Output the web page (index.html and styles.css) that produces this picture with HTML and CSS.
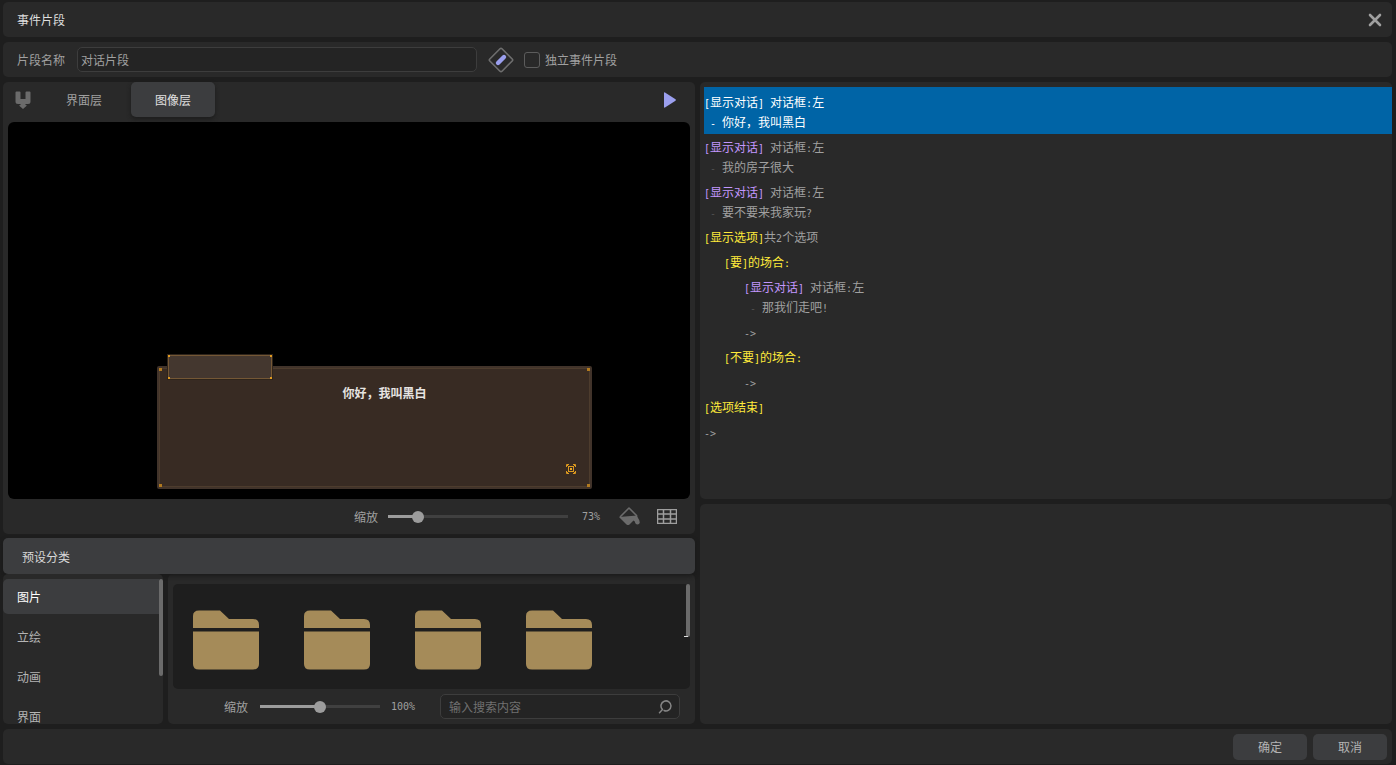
FILE: index.html
```html
<!DOCTYPE html>
<html lang="zh-CN">
<head>
<meta charset="utf-8">
<title>事件片段</title>
<link rel="stylesheet" href="styles.css">
</head>
<body>
<div class="window">
  <header class="panel titlebar">
    <span>事件片段</span>
    <button class="icon-button" type="button" aria-label="关闭">
      <svg width="14" height="14" viewBox="0 0 14 14"><path d="M2 2L12 12M12 2L2 12" fill="none" stroke="#a0a0a0" stroke-width="2.6" stroke-linecap="round"/></svg>
    </button>
  </header>

  <div class="panel name-row">
    <label for="clip-name">片段名称</label>
    <input id="clip-name" class="field name-input" type="text" value="对话片段">
    <button class="icon-button edit" type="button" aria-label="编辑">
      <svg width="26" height="26" viewBox="0 0 26 26"><path d="M12 1.8Q13 .8 14 1.8L24.2 12Q25.2 13 24.2 14L14 24.2Q13 25.2 12 24.2L1.8 14Q.8 13 1.8 12Z" fill="none" stroke="#6e6e6e" stroke-width="1.6"/><path d="M10 16L16 10" stroke="#9b9fee" stroke-width="4.4" stroke-linecap="round"/></svg>
    </button>
    <input id="standalone" class="check" type="checkbox">
    <label for="standalone">独立事件片段</label>
  </div>

  <main class="columns">
    <div class="left">
      <section class="panel viewer">
        <div class="tabs">
          <button class="icon-button tool" type="button" aria-label="图层工具">
            <svg width="16" height="18" viewBox="0 0 16 18"><path d="M.5 1.5Q.5 .5 1.500 .5H4.500Q5.500 .5 5.500 1.500V8H10.500V1.500Q10.500 .5 11.500 .5H14.500Q15.500 .5 15.500 1.500V10.500Q15.500 13 13 13H10.500V14L12 14.500L8 18L4 14.500L5.500 14V13H3Q.5 13 .5 10.500Z" fill="#6b6b6b"/></svg>
          </button>
          <button class="tab" type="button">界面层</button>
          <button class="tab active" type="button">图像层</button>
          <button class="icon-button play" type="button" aria-label="播放">
            <svg width="12" height="16" viewBox="0 0 12 16"><path d="M0 1Q0 0 1 .4L11.5 7.300Q12.200 8 11.5 8.700L1 15.600Q0 16 0 15Z" fill="#9b9fee"/></svg>
          </button>
        </div>
        <div class="stage">
          <div class="dialog">
            <i class="pin tl"></i><i class="pin tr"></i><i class="pin bl"></i><i class="pin br"></i>
            <div class="nameplate"><i class="dot tl"></i><i class="dot tr"></i><i class="dot bl"></i><i class="dot br"></i></div>
            <p class="speech">你好，我叫黑白</p>
            <svg class="next" width="10" height="10" viewBox="0 0 10 10"><path d="M.5 3V.5H3M7 .5H9.5V3M9.5 7V9.5H7M3 9.5H.5V7M1 1L3 3M9 1L7 3M9 9L7 7M1 9L3 7M2.5 2.5H7.5V7.5H2.5Z" fill="none" stroke="#dc991f"/><path d="M4 4H6V6H4Z" fill="#e8a72b"/></svg>
          </div>
        </div>
        <div class="view-controls">
          <label for="view-zoom">缩放</label>
          <input id="view-zoom" class="range wide" type="range" min="0" max="100" value="14">
          <output class="half view-value" for="view-zoom">73%</output>
          <button class="icon-button fill-tool" type="button" aria-label="填充">
            <svg width="22" height="19" viewBox="0 0 22 19"><path d="M1 10L10 1L18 9" fill="none" stroke="#6b6b6b" stroke-width="1.6" stroke-linejoin="round"/><path d="M0 10L18 8.5L19 11Q21 13.5 20.800 15.5Q20.5 17.5 18.5 17.5Q16.300 17.5 15.800 14.5L14.5 13.5L10.5 17.5Q9 18.700 7.5 17.5Z" fill="#6b6b6b"/></svg>
          </button>
          <button class="icon-button grid-tool" type="button" aria-label="网格">
            <svg width="20" height="15" viewBox="0 0 20 15"><path d="M.5 .5H19.5V14.5H.5ZM6.5 .5V14.5M13.5 .5V14.5M.5 5H19.5M.5 10H19.5" fill="none" stroke="#9e9e9e" stroke-width="1.5"/></svg>
          </button>
        </div>
      </section>

      <h2 class="section-head">预设分类</h2>

      <div class="presets">
        <nav class="panel categories">
          <button class="category active" type="button">图片</button>
          <button class="category" type="button">立绘</button>
          <button class="category" type="button">动画</button>
          <button class="category" type="button">界面</button>
          <span class="scroll-thumb category-thumb"></span>
        </nav>
        <section class="panel browser">
          <div class="folders">
            <svg class="folder" viewBox="0 0 66 60"><path d="M0 18V6Q0 .5 6 .5H27L36 9H60Q66 9 66 15V18ZM0 21.5H66V54Q66 59.5 60 59.5H6Q0 59.5 0 54Z"/></svg>
            <svg class="folder" viewBox="0 0 66 60"><path d="M0 18V6Q0 .5 6 .5H27L36 9H60Q66 9 66 15V18ZM0 21.5H66V54Q66 59.5 60 59.5H6Q0 59.5 0 54Z"/></svg>
            <svg class="folder" viewBox="0 0 66 60"><path d="M0 18V6Q0 .5 6 .5H27L36 9H60Q66 9 66 15V18ZM0 21.5H66V54Q66 59.5 60 59.5H6Q0 59.5 0 54Z"/></svg>
            <svg class="folder" viewBox="0 0 66 60"><path d="M0 18V6Q0 .5 6 .5H27L36 9H60Q66 9 66 15V18ZM0 21.5H66V54Q66 59.5 60 59.5H6Q0 59.5 0 54Z"/></svg>
            <span class="scroll-thumb folder-thumb"></span>
            <span class="thumb-mark"></span>
          </div>
          <div class="browser-controls">
            <label for="icon-zoom">缩放</label>
            <input id="icon-zoom" class="range narrow" type="range" min="0" max="100" value="50">
            <output class="half icon-value" for="icon-zoom">100%</output>
            <div class="field search">
              <input type="search" placeholder="输入搜索内容" aria-label="搜索">
              <svg width="14" height="14" viewBox="0 0 14 14"><path d="M4.300 9.300A5 5 0 1 1 6 10.5M4.5 9.5L1.5 12.800" fill="none" stroke="#858585" stroke-width="1.5" stroke-linecap="round"/></svg>
            </div>
          </div>
        </section>
      </div>
    </div>

    <div class="right">
      <section class="panel script">
        <div class="command selected"><div class="line"><b class="talk"><i>[</i>显示对话<i>] </i></b>对话框<i>:</i>左</div><div class="line"><i class="dash"> - </i>你好，我叫黑白</div></div>
        <div class="command"><div class="line"><b class="talk"><i>[</i>显示对话<i>] </i></b>对话框<i>:</i>左</div><div class="line"><i class="dash"> - </i>我的房子很大</div></div>
        <div class="command"><div class="line"><b class="talk"><i>[</i>显示对话<i>] </i></b>对话框<i>:</i>左</div><div class="line"><i class="dash"> - </i>要不要来我家玩<i>?</i></div></div>
        <div class="command"><div class="line"><b class="choice"><i>[</i>显示选项<i>]</i></b>共<i>2</i>个选项</div></div>
        <div class="branch">
          <div class="command"><div class="line"><b class="choice"><i>[</i>要<i>]</i>的场合<i>:</i></b></div></div>
          <div class="branch">
            <div class="command"><div class="line"><b class="talk"><i>[</i>显示对话<i>] </i></b>对话框<i>:</i>左</div><div class="line"><i class="dash"> - </i>那我们走吧<i>!</i></div></div>
            <div class="command"><div class="line"><i>-&gt;</i></div></div>
          </div>
          <div class="command"><div class="line"><b class="choice"><i>[</i>不要<i>]</i>的场合<i>:</i></b></div></div>
          <div class="branch">
            <div class="command"><div class="line"><i>-&gt;</i></div></div>
          </div>
        </div>
        <div class="command"><div class="line"><b class="choice"><i>[</i>选项结束<i>]</i></b></div></div>
        <div class="command"><div class="line"><i>-&gt;</i></div></div>
      </section>
      <section class="panel"></section>
    </div>
  </main>

  <footer class="panel actions">
    <button class="button" type="button">确定</button>
    <button class="button" type="button">取消</button>
  </footer>
</div>
</body>
</html>
```
FILE: styles.css
```css
* { box-sizing: border-box; }

body {
  margin: 0;
  background: #1e1e1e;
  color: #a0a0a0;
  font: 12px/20px "Noto Sans CJK SC", sans-serif;
}

button, input { font: inherit; color: inherit; }
svg { display: block; flex: none; }

.window {
  height: 100vh;
  display: grid;
  grid-template-rows: 35px 35px minmax(0, 1fr) 35px;
  gap: 5px;
  padding: 2px 4px 1px 3px;
}

.panel { background: #292929; border-radius: 5px; }

.icon-button { padding: 0; border: 0; background: none; }

.titlebar {
  display: flex;
  align-items: center;
  justify-content: space-between;
  padding: 0 10px 0 14px;
  color: #dedede;
}

.name-row {
  display: flex;
  align-items: center;
  padding-left: 14px;
}

.field {
  height: 25px;
  border: 1px solid #3d3d3d;
  border-radius: 5px;
  background: #242424;
  outline: 0;
}

.name-input { width: 400px; margin-left: 12px; padding: 0 3px; }
.edit { margin: 0 10px 0 11px; }

.check {
  appearance: none;
  width: 16px;
  height: 16px;
  margin: 0 5px 0 0;
  border: 1px solid #5c5c5c;
  border-radius: 3px;
}

.columns {
  display: grid;
  grid-template-columns: minmax(0, 1fr) minmax(0, 1fr);
  gap: 5px;
  min-height: 0;
}

.left { display: flex; flex-direction: column; min-height: 0; }

.viewer { flex: 1; display: flex; flex-direction: column; min-height: 0; padding: 0 5px; }

.tabs {
  display: flex;
  align-items: center;
  height: 40px;
  padding: 0 14px 5px 7px;
}

.tool { margin-right: 11px; }

.tab {
  width: 84px;
  height: 35px;
  padding: 0;
  border: 0;
  border-radius: 5px;
  background: none;
}

.tab.active { background: #3c3d3f; color: #e0e0e0; box-shadow: 0 2px 4px #1c1c1c; }
.tab + .tab { margin-left: 5px; }
.play { margin-left: auto; }

.stage {
  position: relative;
  flex: 1;
  min-height: 0;
  overflow: hidden;
  border-radius: 6px;
  background: #000;
}

.dialog {
  position: absolute;
  left: 149px;
  bottom: 10px;
  width: 435px;
  height: 123px;
  border: 2px solid #41332a;
  border-radius: 2px;
  background: #382b23;
  box-shadow: inset 0 0 0 1px #4d3c2d;
}

.nameplate {
  position: absolute;
  left: 8px;
  top: -14px;
  width: 106px;
  height: 26px;
  border: 1px solid #2e241b;
  background: #44372f;
  box-shadow: inset 0 0 0 1px #745735;
}

.speech {
  margin: 15px 0 0 20px;
  text-align: center;
  font-weight: 700;
  line-height: 20px;
  color: #e6e3e1;
}

.next { position: absolute; right: 14px; bottom: 13px; }

.pin, .dot { position: absolute; width: 3px; height: 3px; background: #b17a20; }
.dot { width: 2px; height: 2px; background: #e09a20; }
.tl { left: 0; top: 0; }
.tr { right: 0; top: 0; }
.bl { left: 0; bottom: 0; }
.br { right: 0; bottom: 0; }

.view-controls {
  display: flex;
  align-items: center;
  justify-content: flex-end;
  height: 35px;
  padding-right: 13px;
}

.range {
  --fill: 50%;
  appearance: none;
  height: 12px;
  margin: 0;
  background: linear-gradient(to right, #9c9c9c var(--fill), #404040 var(--fill)) center / 100% 3px no-repeat;
}

.range::-webkit-slider-thumb {
  appearance: none;
  width: 12px;
  height: 12px;
  border-radius: 50%;
  background: #9c9c9c;
}

.wide { --fill: 16%; width: 180px; margin-left: 10px; }
.narrow { width: 120px; margin-left: 12px; }

.half, .line i {
  font-family: "DejaVu Sans Mono", monospace;
  font-size: 10px;
  font-style: normal;
}

.view-value { width: 18px; margin-left: 14px; }
.fill-tool { margin-left: 19px; }
.grid-tool { margin-left: 16px; }

.section-head {
  position: relative;
  height: 36px;
  margin: 4px 0 0;
  padding-left: 19px;
  border-radius: 5px;
  background: #3c3d3f;
  box-shadow: 0 2px 4px #1a1a1a;
  color: #d8d8d8;
  font-size: 12px;
  font-weight: 400;
  line-height: 37px;
}

.presets {
  display: grid;
  grid-template-columns: 160px minmax(0, 1fr);
  gap: 5px;
  height: 150px;
}

.categories {
  position: relative;
  overflow: hidden;
  display: flex;
  flex-direction: column;
  gap: 5px;
  padding: 5px 4px 0 0;
}

.category {
  flex: none;
  height: 35px;
  padding: 0 14px;
  border: 0;
  border-radius: 5px 0 0 5px;
  background: none;
  text-align: left;
  color: #b4b4b4;
}

.category.active { background: #3c3d3f; color: #fff; }

.scroll-thumb { position: absolute; right: 0; width: 4px; border-radius: 2px; background: #6b6b6b; }
.category-thumb { top: 5px; height: 97px; }
.folder-thumb { top: 0; height: 53px; }
.thumb-mark { position: absolute; top: 52px; right: 2px; width: 4px; height: 1px; background: #e0e0e0; }

.browser { display: flex; flex-direction: column; padding: 10px 5px 0; }

.folders {
  position: relative;
  flex: 1;
  display: flex;
  align-items: flex-start;
  gap: 45px;
  padding: 26px 20px 0;
  border-radius: 5px;
  background: #1e1e1e;
}

.folder { width: 66px; height: 60px; fill: #a58b59; }

.browser-controls {
  display: flex;
  align-items: center;
  justify-content: flex-end;
  height: 35px;
  padding-right: 10px;
}

.icon-value { width: 24px; margin: 0 25px 0 11px; }

.search { display: flex; align-items: center; width: 240px; padding: 0 7px 0 8px; }
.search input { flex: 1; min-width: 0; padding: 0; border: 0; outline: 0; background: none; }
.search input::placeholder { color: #707070; }

.right {
  display: grid;
  grid-template-rows: minmax(0, 1fr) 220px;
  gap: 5px;
  min-height: 0;
}

.script { padding: 5px 0 0 4px; overflow: hidden; }
.branch { padding-left: 20px; }
.command { padding: 5px 0 2px; margin-bottom: -2px; }
.line { height: 20px; white-space: pre; overflow: hidden; }
.line b { font-weight: 400; }
.talk { color: #c397ff; }
.choice { color: #ffeb3b; }
.line .dash { color: #505050; }
.selected { background: #0064a6; }
.selected, .selected .talk, .selected .line .dash { color: #fff; }

.actions {
  display: flex;
  align-items: center;
  justify-content: flex-end;
  gap: 6px;
  padding-right: 5px;
}

.button {
  width: 74px;
  height: 26px;
  padding: 0;
  border: 0;
  border-radius: 5px;
  background: #3c3d3f;
  color: #b4b4b4;
}
```
